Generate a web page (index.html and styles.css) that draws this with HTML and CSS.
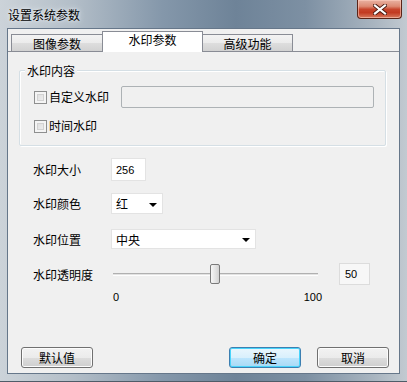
FILE: index.html
```html
<!DOCTYPE html>
<html>
<head>
  <title>设置系统参数</title>
  <link rel="stylesheet" href="styles.css">
</head>
<body>
  <div class="window">
    <div class="titlebar">
      <span class="title">设置系统参数</span>
      <span class="close">
        <svg width="14" height="11" viewBox="0 0 14 11">
          <path d="M2 1.5 L12 9.5 M12 1.5 L2 9.5" stroke="#4a1a10" stroke-width="4" stroke-linecap="square"/>
          <path d="M2 1.5 L12 9.5 M12 1.5 L2 9.5" stroke="#fff" stroke-width="2.2" stroke-linecap="square"/>
        </svg>
      </span>
    </div>

    <div class="client">
      <div class="tabs">
        <div class="tab">图像参数</div>
        <div class="tab active">水印参数</div>
        <div class="tab last">高级功能</div>
      </div>

      <div class="panel">
        <div class="group">
          <div class="group-title">水印内容</div>
          <div class="group-row first">
            <span class="check"></span>
            <span class="check-label">自定义水印</span>
            <span class="textbox"></span>
          </div>
          <div class="group-row">
            <span class="check"></span>
            <span class="check-label">时间水印</span>
          </div>
        </div>

        <div class="row row-size">
          <span class="label">水印大小</span>
          <span class="field size num">256</span>
        </div>
        <div class="row row-color">
          <span class="label">水印颜色</span>
          <span class="field combo color">红<i class="arrow"></i></span>
        </div>
        <div class="row row-pos">
          <span class="label">水印位置</span>
          <span class="field combo pos">中央<i class="arrow"></i></span>
        </div>
        <div class="row row-alpha">
          <span class="label">水印透明度</span>
          <span class="slider"><span class="thumb"></span></span>
          <span class="field value num">50</span>
        </div>
        <div class="ticks num">
          <span>0</span>
          <span>100</span>
        </div>

        <div class="buttons">
          <button class="btn">默认值</button>
          <button class="btn default">确定</button>
          <button class="btn cancel">取消</button>
        </div>
      </div>
    </div>
  </div>
</body>
</html>
```

FILE: styles.css
```css
body {
  margin: 0;
  font-family: "Noto Sans CJK SC", "Noto Sans", sans-serif;
  font-size: 12px;
  color: #000;
}
.window {
  width: 407px;
  height: 382px;
  box-sizing: border-box;
  padding: 0 8px 8px 8px;
  display: flex;
  flex-direction: column;
  background: linear-gradient(90deg, #ccd3d9 0%, #b3bec8 18%, #8497aa 40%, #6e8398 58%, #7d90a3 75%, #a9b5c0 92%, #c2cad1 100%);
  border-bottom: 1px solid #4f5c68;
}
.titlebar {
  height: 29px;
  display: flex;
  align-items: flex-start;
  flex-shrink: 0;
}
.title {
  line-height: 14px;
  margin-top: 8px;
  text-shadow: 0 0 6px #e8eef3, 0 0 3px #e8eef3;
}
.close {
  margin-left: auto;
  margin-right: -3px;
  width: 45px;
  height: 19px;
  box-sizing: border-box;
  border: 1px solid #5a2417;
  border-top: none;
  border-radius: 0 0 4px 4px;
  background: linear-gradient(#e9b2a2 0%, #dd8a73 35%, #c7452c 52%, #c23a21 70%, #d77b5f 100%);
  box-shadow: inset 0 0 0 1px rgba(255, 210, 195, 0.55);
  display: flex;
  align-items: center;
  justify-content: center;
}
.client {
  flex: 1;
  display: flex;
  flex-direction: column;
  background: #f0f0f0;
  box-shadow: 0 0 0 1px #66778a;
}
.tabs {
  height: 22px;
  display: flex;
  align-items: flex-end;
  padding-left: 3px;
  flex-shrink: 0;
}
.tab {
  height: 17px;
  width: 92px;
  box-sizing: border-box;
  border: 1px solid #898c95;
  border-bottom: none;
  background: linear-gradient(#f3f3f3, #ebebeb 50%, #dedede 50%, #d2d2d2);
  text-align: center;
  line-height: 17px;
}
.tab.active {
  position: relative;
  z-index: 1;
  width: 101px;
  height: 21px;
  margin-bottom: -1px;
  margin-left: -1px;
  background: #fff;
  line-height: 15px;
}
.tab.last {
  width: 91px;
  margin-left: -1px;
}
.panel {
  flex: 1;
  display: flex;
  flex-direction: column;
  border-top: 1px solid #898c95;
  padding-bottom: 5px;
}
.group {
  margin: 18px 13px 0 11px;
  border: 1px solid #d5dfe5;
  border-radius: 2px;
  box-shadow: inset 1px 1px #fff, 1px 1px #fff;
  padding: 0 0 11px 14px;
}
.group-title {
  margin: -7px 0 0 -9px;
  padding: 0 2px;
  width: fit-content;
  line-height: 14px;
  background: #f0f0f0;
}
.group-row {
  display: flex;
  align-items: center;
  height: 16px;
  margin-top: 10px;
}
.group-row.first {
  height: 22px;
  margin-top: 8px;
}
.check {
  width: 13px;
  height: 13px;
  box-sizing: border-box;
  border: 1px solid #8e8f8f;
  background: linear-gradient(135deg, #d9d9d9, #f4f4f4);
  box-shadow: inset 0 0 0 2px #f4f4f4, inset 0 0 0 3px #d2d2d2;
  margin-right: 2px;
}
.check-label {
  line-height: 14px;
}
.textbox {
  margin-left: 12px;
  width: 253px;
  height: 22px;
  box-sizing: border-box;
  border: 1px solid #adb2b5;
  border-radius: 2px;
  background: #f0f0f0;
}
.row {
  display: flex;
  align-items: center;
  padding-left: 25px;
  flex-shrink: 0;
}
.label {
  width: 78px;
}
.field {
  box-sizing: border-box;
  border: 1px solid #e3e3e3;
  background: #fff;
  display: flex;
  align-items: center;
  padding-left: 4px;
}
.num {
  font-family: "Liberation Sans", Arial, sans-serif;
  font-size: 11px;
}
.row-size {
  margin-top: 12px;
  height: 23px;
}
.size {
  width: 35px;
  height: 23px;
}
.row-color {
  margin-top: 12px;
  height: 21px;
}
.combo {
  justify-content: space-between;
  padding-right: 5px;
}
.color {
  width: 52px;
  height: 21px;
}
.row-pos {
  margin-top: 15px;
  height: 20px;
}
.pos {
  width: 145px;
  height: 20px;
}
.arrow {
  width: 0;
  height: 0;
  border-left: 4px solid transparent;
  border-right: 4px solid transparent;
  border-top: 4px solid #000;
  margin-top: 2px;
}
.row-alpha {
  margin-top: 14px;
  height: 22px;
}
.slider {
  position: relative;
  width: 205px;
  height: 3px;
  margin-left: 2px;
  border-top: 1px solid #b0b0b0;
  border-bottom: 1px solid #fdfdfd;
  background: #e2e2e2;
  box-sizing: border-box;
}
.thumb {
  position: absolute;
  left: 97px;
  top: -10px;
  width: 10px;
  height: 20px;
  box-sizing: border-box;
  border: 1px solid #7a7a7a;
  border-radius: 2px;
  background: linear-gradient(90deg, #f7f7f7, #e2e2e2 60%, #d3d3d3);
}
.value {
  margin-left: 21px;
  width: 31px;
  height: 22px;
  padding-left: 5px;
  background: #f7f7f7;
  border-color: #dcdcdc;
}
.ticks {
  display: flex;
  justify-content: space-between;
  width: 209px;
  margin: 6px 0 0 105px;
  line-height: 13px;
}
.buttons {
  margin-top: auto;
  display: flex;
  padding: 0 10px 0 13px;
}
.btn {
  width: 72px;
  height: 21px;
  padding: 0;
  font-family: inherit;
  font-size: 12px;
  color: #000;
  border: 1px solid #707070;
  border-radius: 3px;
  background: linear-gradient(#f2f2f2, #ebebeb 50%, #dddddd 50%, #cfcfcf);
  box-shadow: inset 0 0 0 1px #fcfcfc;
}
.btn.default {
  margin-left: auto;
  border-color: #3c7fb1;
  background: linear-gradient(#eaf6fd, #d9f0fc 50%, #bee6fd 50%, #a7d9f5);
  box-shadow: inset 0 0 0 1px #48d4fb;
}
.btn.cancel {
  margin-left: 16px;
}
```
